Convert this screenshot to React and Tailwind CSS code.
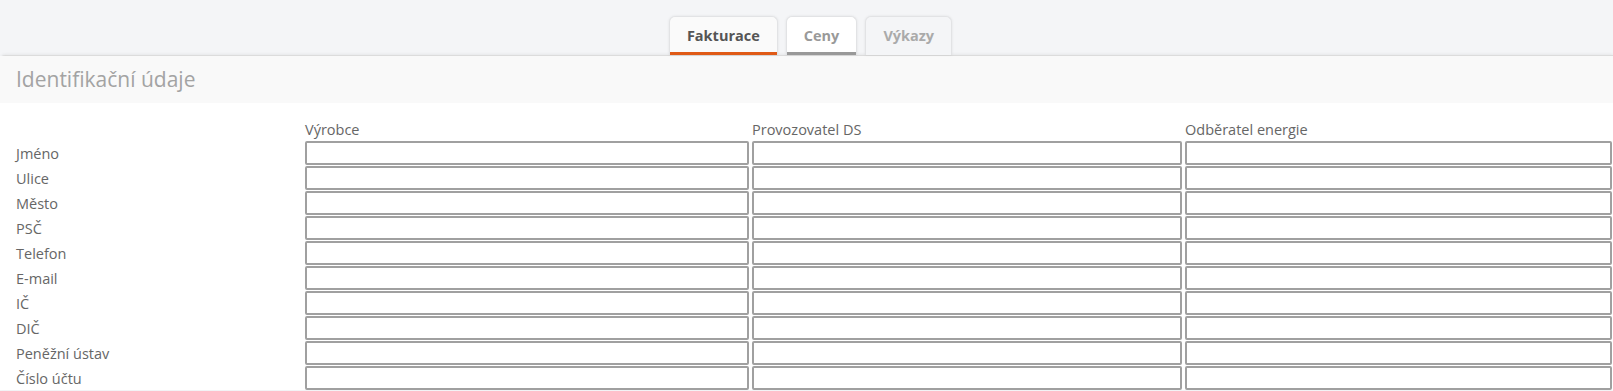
const rows = [
    "Jméno",
    "Ulice",
    "Město",
    "PSČ",
    "Telefon",
    "E-mail",
    "IČ",
    "DIČ",
    "Peněžní ústav",
    "Číslo účtu",
];

const columns = ["Výrobce", "Provozovatel DS", "Odběratel energie"];

const tabs = [
    { label: "Fakturace", className: "bg-[#fafafa] text-[#555]", bar: "bg-[#e05a17]" },
    { label: "Ceny", className: "bg-white text-[#999]", bar: "bg-[#999]" },
    { label: "Výkazy", className: "bg-[#f4f5f7] text-[#aaa]", bar: "" },
];

const Tab = ({ tab }) => (
    <div
        className={`relative h-[39px] px-[17px] flex items-center rounded-t-[6px] border border-b-0 border-[#e2e3e5] shadow-[0_0_3px_rgba(0,0,0,0.08)] text-[14.5px] font-bold ${tab.className}`}
    >
        {tab.label}
        {tab.bar && <div className={`absolute left-0 right-0 bottom-0 h-[3px] ${tab.bar}`} />}
    </div>
);

export default function App() {
    return (
        <div className="min-h-screen bg-[#f4f5f7] font-['Open_Sans',sans-serif] overflow-hidden">
            <div className="pt-[16px] flex justify-center gap-[8px] pl-[8px]">
                {tabs.map((tab) => (
                    <Tab key={tab.label} tab={tab} />
                ))}
            </div>
            <div className="bg-white rounded-tl-[5px] border-t border-[#dcdcdc] shadow-[0_-1px_3px_rgba(0,0,0,0.06)]">
                <div className="h-[47px] bg-[#f9f9f9] flex items-center px-4 text-[21px] text-[#a3a3a3]">
                    Identifikační údaje
                </div>
                <div className="pt-[16px] pl-4 pr-px grid grid-cols-[286px_444px_430px_1fr] gap-x-[3px] gap-y-px">
                    <div className="h-[21px]" />
                    {columns.map((col) => (
                        <div key={col} className="h-[21px] flex items-end text-[14.5px] leading-[20px] text-[#666]">
                            {col}
                        </div>
                    ))}
                    {rows.map((row) => (
                        <div key={row} className="contents">
                            <div className="h-6 flex items-center text-[14.5px] text-[#666] pt-[1px]">{row}</div>
                            {columns.map((col) => (
                                <input
                                    key={col}
                                    type="text"
                                    className="h-6 w-full border-2 border-[#a0a0a0] rounded-[2px] bg-white outline-none"
                                />
                            ))}
                        </div>
                    ))}
                </div>
            </div>
        </div>
    );
}
